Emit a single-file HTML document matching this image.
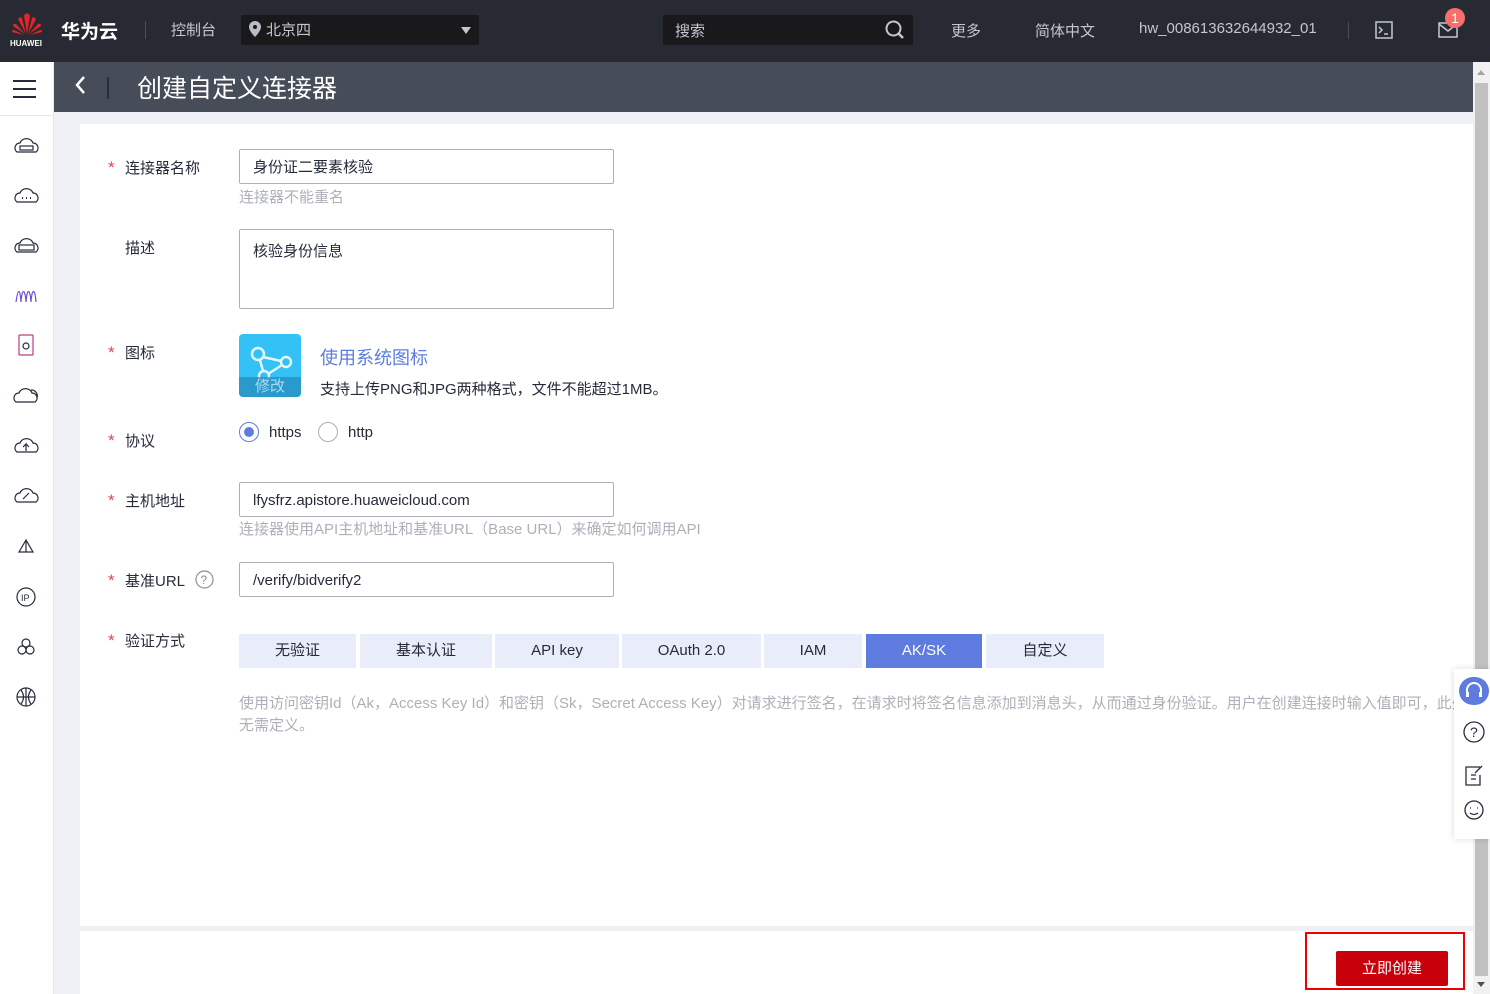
<!DOCTYPE html>
<html><head><meta charset="utf-8"><style>
*{margin:0;padding:0;box-sizing:border-box}
body{width:1490px;height:994px;overflow:hidden;position:relative;background:#eef0f5;font-family:"Liberation Sans","Noto Sans CJK SC",sans-serif;font-size:15px;color:#252b3a}
.a{position:absolute}
.top{left:0;top:0;width:1490px;height:62px;background:#272a33;color:#c4c7cf}
.side{left:0;top:62px;width:54px;height:932px;background:#fff;border-right:1px solid #e4e6ea}
.hdr{left:54px;top:62px;width:1419px;height:50px;background:#474c59;color:#fff}
.card{left:80px;top:124px;width:1393px;height:802px;background:#fff}
.foot{left:80px;top:931px;width:1393px;height:63px;background:#fff}
.lbl{font-size:15px;color:#252b3a}
.lbl b{color:#e5444a;font-weight:normal;display:inline-block;width:17px;font-size:17px}
.inp{border:1px solid #adb0b8;border-radius:2px;background:#fff;padding-left:13px;font-size:15px;color:#252b3a}
.hint{color:#adb0b8;font-size:15px}
.tab{top:634px;height:34px;background:#e8edf9;text-align:center;line-height:34px;font-size:15px;color:#252b3a}
</style></head><body>
<div class="a top">
 <svg class="a" style="left:10px;top:12px" width="34" height="24" viewBox="0 0 34 24"><g fill="#e5242a"><path d="M17 22 L14 4 Q16 0 17 2Z"/><path d="M17 22 L20 4 Q18 0 17 2Z"/><path d="M16 22 L8 7 Q10 4 12 6Z"/><path d="M18 22 L26 7 Q24 4 22 6Z"/><path d="M15 22 L3 14 Q3 11 6 12Z"/><path d="M19 22 L31 14 Q31 11 28 12Z"/><path d="M14 23 L2 20 Q2 18 4 18Z"/><path d="M20 23 L32 20 Q32 18 30 18Z"/></g></svg>
 <div class="a" style="left:10px;top:39px;font-size:8px;font-weight:bold;color:#fff">HUAWEI</div>
 <div class="a" style="left:61px;top:17px;font-size:19px;font-weight:bold;color:#fff">华为云</div>
 <div class="a" style="left:145px;top:21px;width:1px;height:18px;background:#4a4e58"></div>
 <div class="a" style="left:171px;top:19px;font-size:15px">控制台</div>
 <div class="a" style="left:241px;top:15px;width:238px;height:30px;background:#19191b;border-radius:2px"></div>
 <svg class="a" style="left:249px;top:21px" width="12" height="16" viewBox="0 0 12 16"><path d="M6 0a6 6 0 0 0-6 6c0 4 6 10 6 10s6-6 6-10a6 6 0 0 0-6-6z" fill="#b8bcc6"/><circle cx="6" cy="6" r="2" fill="#19191b"/></svg>
 <div class="a" style="left:266px;top:19px;font-size:15px;color:#c4c7cf">北京四</div>
 <div class="a" style="left:461px;top:27px;border-left:5px solid transparent;border-right:5px solid transparent;border-top:7px solid #c4c7cf"></div>
 <div class="a" style="left:663px;top:15px;width:250px;height:30px;background:#19191b;border-radius:2px"></div>
 <div class="a" style="left:675px;top:20px;font-size:15px;color:#c4c7cf">搜索</div>
 <svg class="a" style="left:885px;top:20px" width="20" height="20" viewBox="0 0 20 20"><circle cx="8.5" cy="8.5" r="7" fill="none" stroke="#c4c7cf" stroke-width="2"/><path d="M13.5 13.5L18 18" stroke="#c4c7cf" stroke-width="2.5"/></svg>
 <div class="a" style="left:951px;top:20px;font-size:15px">更多</div>
 <div class="a" style="left:1035px;top:20px;font-size:15px">简体中文</div>
 <div class="a" style="left:1139px;top:20px;font-size:15px">hw_008613632644932_01</div>
 <div class="a" style="left:1348px;top:22px;width:1px;height:17px;background:#4a4e58"></div>
 <svg class="a" style="left:1375px;top:21px" width="18" height="18" viewBox="0 0 18 18"><rect x="1" y="1" width="16" height="16" fill="none" stroke="#c4c7cf" stroke-width="1.5"/><path d="M4 6l3 3-3 3M9 13h4" fill="none" stroke="#c4c7cf" stroke-width="1.5"/></svg>
 <svg class="a" style="left:1438px;top:21px" width="20" height="18" viewBox="0 0 20 18"><rect x="1" y="2" width="18" height="14" fill="none" stroke="#c4c7cf" stroke-width="1.5"/><path d="M1 3l9 7 9-7" fill="none" stroke="#c4c7cf" stroke-width="1.5"/></svg>
 <div class="a" style="left:1445px;top:8px;width:20px;height:20px;border-radius:10px;background:#f66f6a;color:#fff;font-size:14px;text-align:center;line-height:20px">1</div>
</div>
<div class="a side">
 <div class="a" style="left:13px;top:18px;width:23px;height:2px;background:#252b3a;box-shadow:0 8px 0 #252b3a,0 16px 0 #252b3a"></div>
 <div class="a" style="left:0;top:53px;width:54px;height:1px;background:#e4e6ea"></div>
 <svg class="a" style="left:12px;top:70px" width="30" height="620" viewBox="0 0 30 620" fill="none" stroke="#252b3a" stroke-width="1.2">
  <path d="M5 20a5 5 0 0 1 3-9 7 7 0 0 1 13 0 5 5 0 0 1 3 9z"/><rect x="8" y="14" width="13" height="4"/>
  <path d="M5 70a5 5 0 0 1 3-9 7 7 0 0 1 13 0 5 5 0 0 1 3 9z"/><path d="M10 66h1M14 66h1M18 66h1" stroke-width="2"/>
  <path d="M5 120a5 5 0 0 1 3-9 7 7 0 0 1 13 0 5 5 0 0 1 3 9z"/><rect x="7" y="113" width="15" height="5"/>
  <path d="M4 170c2-14 4-14 5 0c1-14 4-14 5 0c1-14 4-14 5 0c1-14 4-14 5 0" stroke="#6a4fd6"/>
  <rect x="7" y="203" width="14" height="20" rx="1" stroke="#c03a7a"/><circle cx="14" cy="214" r="3"/>
  <path d="M4 270a5 5 0 0 1 3-9 7 7 0 0 1 13 0 5 5 0 0 1 3 9z M19 258a6 6 0 0 1 6 8"/>
  <path d="M5 320a5 5 0 0 1 3-9 7 7 0 0 1 13 0 5 5 0 0 1 3 9z"/><path d="M14 319v-7l-3 3M14 312l3 3"/>
  <path d="M5 370a5 5 0 0 1 3-9 7 7 0 0 1 13 0 5 5 0 0 1 3 9z"/><path d="M11 367l6-6"/>
  <path d="M14 408l-7 12h14z M14 408v12"/>
  <circle cx="14" cy="465" r="9"/><text x="9" y="469" font-size="9" fill="#252b3a" stroke="none" font-family="Liberation Sans">IP</text>
  <circle cx="14" cy="511" r="4"/><circle cx="10" cy="518" r="4"/><circle cx="18" cy="518" r="4"/>
  <circle cx="14" cy="565" r="9"/><path d="M5 565h18M14 556v18M9 558q5 7 0 14M19 558q-5 7 0 14"/>
 </svg>
</div>
<div class="a hdr">
 <svg class="a" style="left:20px;top:13px" width="12" height="20" viewBox="0 0 12 20"><path d="M10 2L3 10l7 8" fill="none" stroke="#fff" stroke-width="2.5"/></svg>
 <div class="a" style="left:53px;top:15px;width:2px;height:22px;background:#2a2e38"></div>
 <div class="a" style="left:83px;top:7px;font-size:25px;color:#fff">创建自定义连接器</div>
</div>
<div class="a card"></div>
<div class="a foot"></div>
<div class="a lbl" style="left:108px;top:157px"><b>*</b>连接器名称</div>
<div class="a inp" style="left:239px;top:149px;width:375px;height:35px;line-height:35px">身份证二要素核验</div>
<div class="a hint" style="left:239px;top:186px">连接器不能重名</div>
<div class="a lbl" style="left:125px;top:237px">描述</div>
<div class="a inp" style="left:239px;top:229px;width:375px;height:80px;padding-top:10px">核验身份信息</div>
<div class="a lbl" style="left:108px;top:342px"><b>*</b>图标</div>
<div class="a" style="left:239px;top:334px;width:62px;height:63px;background:#33c1f6;border-radius:4px;overflow:hidden">
 <svg class="a" style="left:0;top:0" width="62" height="63"><g fill="none" stroke="#e6f7fe" stroke-width="2.5"><circle cx="19" cy="20" r="6"/><circle cx="47" cy="28" r="5"/><circle cx="25" cy="42" r="5"/><path d="M24 23l18 4M21 26l3 11M43 31l-14 9"/></g></svg>
 <div class="a" style="left:0;top:43px;width:62px;height:20px;background:rgba(40,140,190,.75);color:#a9dcf2;text-align:center;font-size:15px;line-height:20px">修改</div>
</div>
<div class="a" style="left:320px;top:344px;font-size:18px;color:#5e7ce0">使用系统图标</div>
<div class="a" style="left:320px;top:378px;font-size:15px">支持上传PNG和JPG两种格式，文件不能超过1MB。</div>
<div class="a lbl" style="left:108px;top:430px"><b>*</b>协议</div>
<div class="a" style="left:239px;top:422px;width:20px;height:20px;border-radius:50%;border:1px solid #5e7ce0"><div class="a" style="left:4px;top:4px;width:10px;height:10px;border-radius:50%;background:#5e7ce0"></div></div>
<div class="a" style="left:269px;top:424px;font-size:15px">https</div>
<div class="a" style="left:318px;top:422px;width:20px;height:20px;border-radius:50%;border:1px solid #adb0b8"></div>
<div class="a" style="left:348px;top:424px;font-size:15px">http</div>
<div class="a lbl" style="left:108px;top:490px"><b>*</b>主机地址</div>
<div class="a inp" style="left:239px;top:482px;width:375px;height:35px;line-height:35px">lfysfrz.apistore.huaweicloud.com</div>
<div class="a hint" style="left:239px;top:518px">连接器使用API主机地址和基准URL（Base URL）来确定如何调用API</div>
<div class="a lbl" style="left:108px;top:570px"><b>*</b>基准URL</div>
<svg class="a" style="left:195px;top:570px" width="19" height="19"><circle cx="9.5" cy="9.5" r="8.5" fill="none" stroke="#8a8e99" stroke-width="1.2"/><text x="5.5" y="14" font-size="12" fill="#8a8e99" font-family="Liberation Sans">?</text></svg>
<div class="a inp" style="left:239px;top:562px;width:375px;height:35px;line-height:35px">/verify/bidverify2</div>
<div class="a lbl" style="left:108px;top:630px"><b>*</b>验证方式</div>
<div class="a tab" style="left:239px;width:117px">无验证</div>
<div class="a tab" style="left:360px;width:132px">基本认证</div>
<div class="a tab" style="left:495px;width:124px">API key</div>
<div class="a tab" style="left:622px;width:139px">OAuth 2.0</div>
<div class="a tab" style="left:764px;width:98px">IAM</div>
<div class="a tab" style="left:866px;width:116px;background:#5e7ce0;color:#fff">AK/SK</div>
<div class="a tab" style="left:986px;width:118px">自定义</div>
<div class="a hint" style="left:239px;top:694px;width:1215px;line-height:20px;white-space:nowrap;overflow:hidden">使用访问密钥Id（Ak，Access Key Id）和密钥（Sk，Secret Access Key）对请求进行签名，在请求时将签名信息添加到消息头，从而通过身份验证。用户在创建连接时输入值即可，此处</div>
<div class="a hint" style="left:239px;top:714px">无需定义。</div>
<div class="a" style="left:1305px;top:932px;width:160px;height:58px;border:2px solid #e00"></div>
<div class="a" style="left:1336px;top:951px;width:112px;height:35px;background:#c7000b;border-radius:2px;color:#fff;text-align:center;line-height:35px;font-size:15px">立即创建</div>
<div class="a" style="left:1473px;top:62px;width:17px;height:932px;background:#f1f1f1"></div>
<div class="a" style="left:1475px;top:83px;width:13px;height:893px;background:#c1c1c1"></div>
<div class="a" style="left:1477px;top:70px;border-left:4px solid transparent;border-right:4px solid transparent;border-bottom:5px solid #a3a3a3"></div>
<div class="a" style="left:1477px;top:982px;border-left:4px solid transparent;border-right:4px solid transparent;border-top:5px solid #505050"></div>
<div class="a" style="left:1454px;top:669px;width:36px;height:170px;background:#fff;box-shadow:0 0 6px rgba(0,0,0,.15)"></div>
<div class="a" style="left:1459px;top:677px;width:30px;height:28px;border-radius:14px;background:#5e7ce0"></div>
<svg class="a" style="left:1462px;top:680px" width="24" height="22"><path d="M5 14v-4a7 7 0 0 1 14 0v4" fill="none" stroke="#fff" stroke-width="2"/><rect x="4" y="12" width="3" height="5" fill="#fff"/><rect x="17" y="12" width="3" height="5" fill="#fff"/></svg>
<svg class="a" style="left:1463px;top:721px" width="24" height="110" fill="none" stroke="#252b3a" stroke-width="1.3"><circle cx="11" cy="11" r="10"/><text x="7" y="16" font-size="14" fill="#252b3a" stroke="none" font-family="Liberation Sans">?</text><path d="M17 46h-14v18h14v-10M8 54h5M8 58h5M12 52l7-7"/><circle cx="11" cy="89" r="9"/><path d="M7 87h1M14 87h1M7 92q4 3 8 0"/></svg>
</body></html>
